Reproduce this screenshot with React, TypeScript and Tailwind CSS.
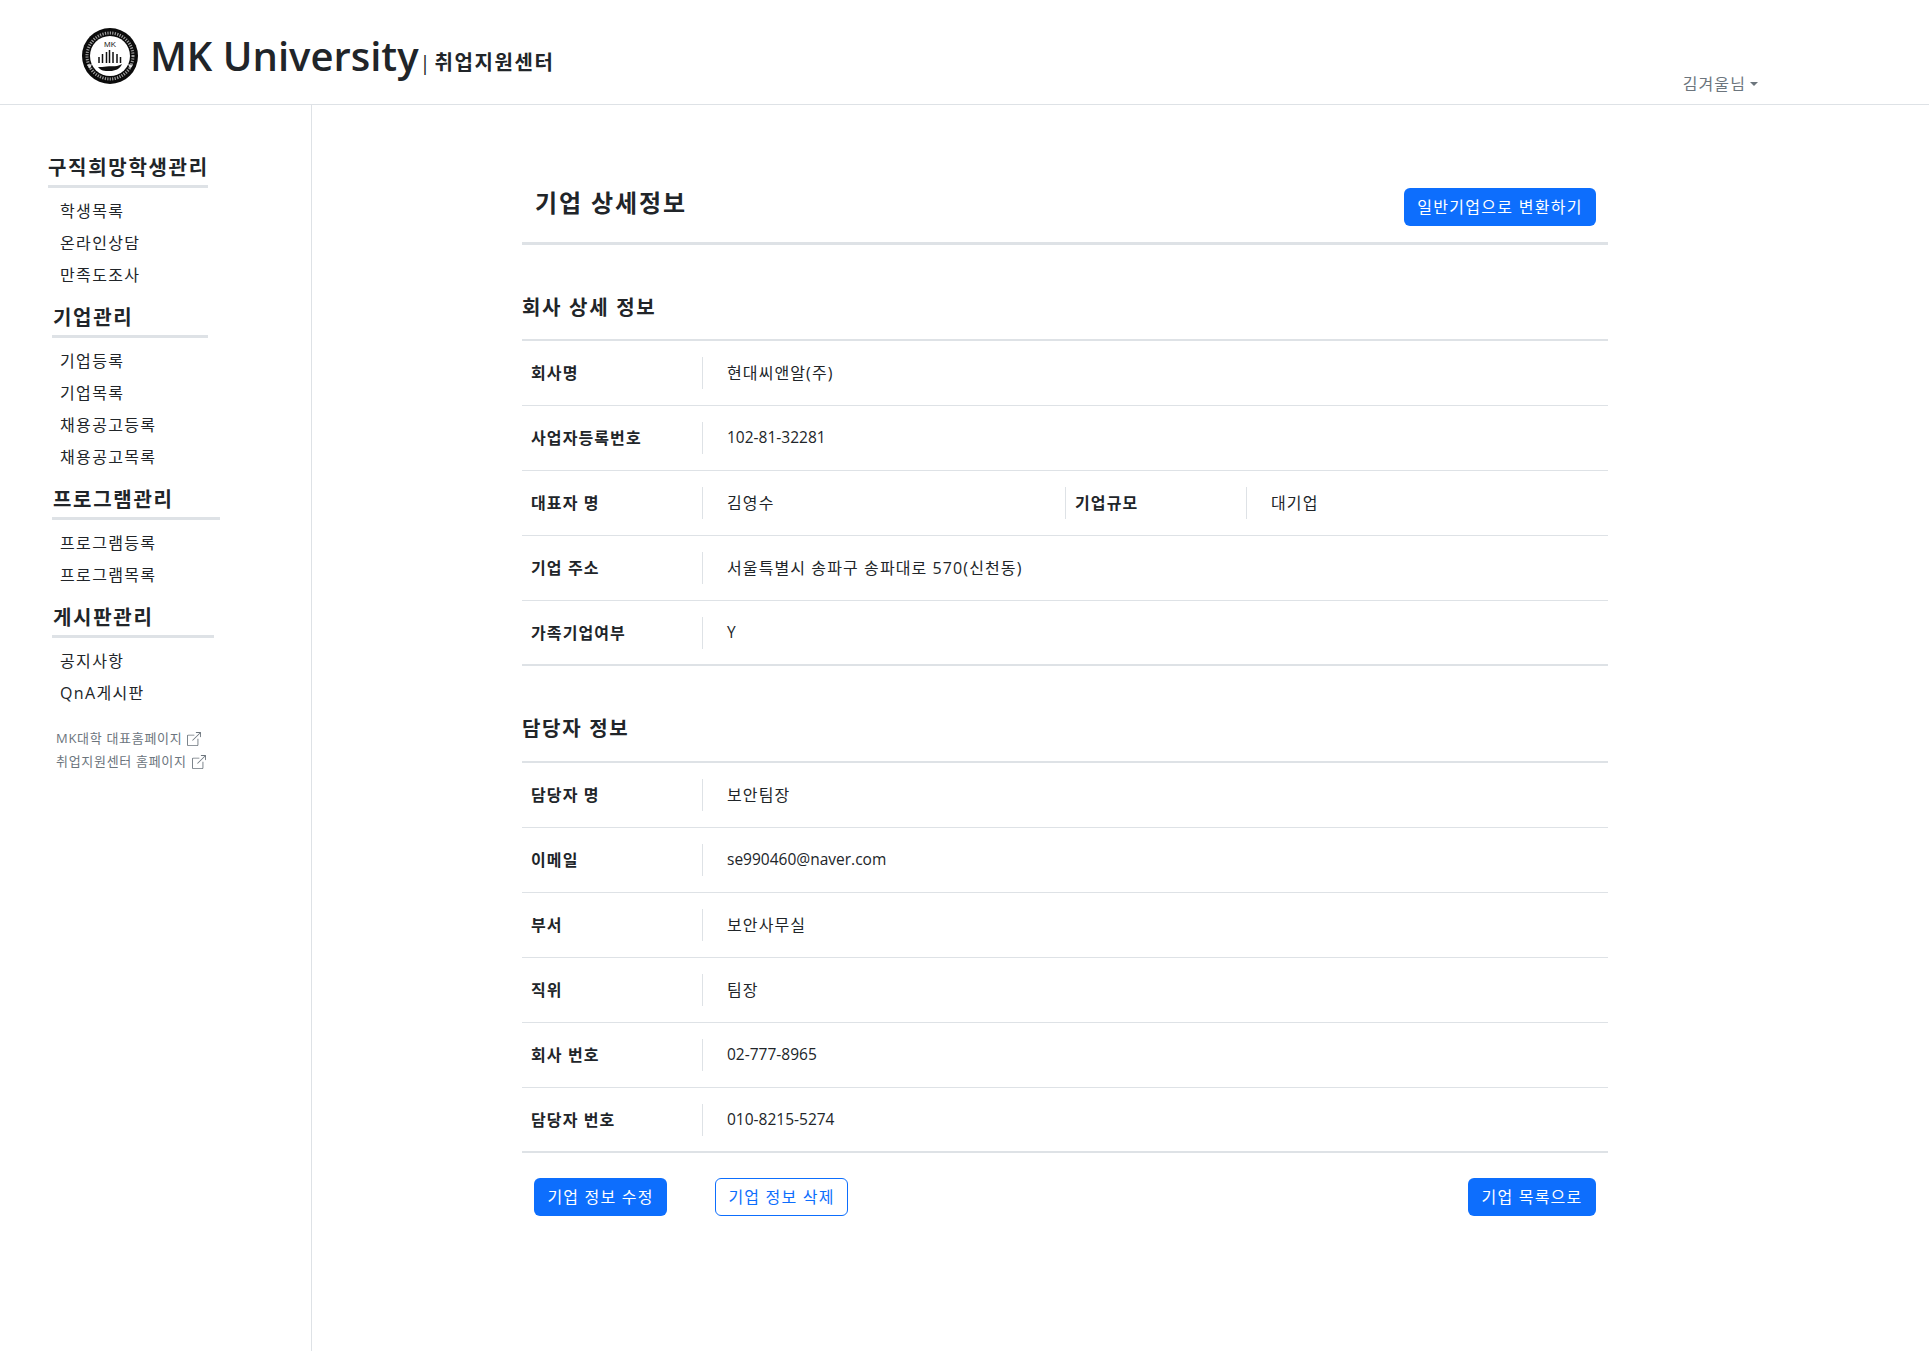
const font = "font-['Open_Sans','Noto_Sans_CJK_KR',sans-serif]";

type Field = { label: string; value: string; label2?: string; value2?: string };

const companyRows: Field[] = [
  { label: '회사명', value: '현대씨앤알(주)' },
  { label: '사업자등록번호', value: '102-81-32281' },
  { label: '대표자 명', value: '김영수', label2: '기업규모', value2: '대기업' },
  { label: '기업 주소', value: '서울특별시 송파구 송파대로 570(신천동)' },
  { label: '가족기업여부', value: 'Y' },
];

const managerRows: Field[] = [
  { label: '담당자 명', value: '보안팀장' },
  { label: '이메일', value: 'se990460@naver.com' },
  { label: '부서', value: '보안사무실' },
  { label: '직위', value: '팀장' },
  { label: '회사 번호', value: '02-777-8965' },
  { label: '담당자 번호', value: '010-8215-5274' },
];

const menus = [
  { title: '구직희망학생관리', items: ['학생목록', '온라인상담', '만족도조사'], titleClass: 'ml-0', lineClass: 'ml-0 w-[160px]' },
  { title: '기업관리', items: ['기업등록', '기업목록', '채용공고등록', '채용공고목록'], titleClass: 'ml-[5px]', lineClass: 'ml-[4px] w-[156px]' },
  { title: '프로그램관리', items: ['프로그램등록', '프로그램목록'], titleClass: 'ml-[5px]', lineClass: 'ml-[4px] w-[168px]' },
  { title: '게시판관리', items: ['공지사항', 'QnA게시판'], titleClass: 'ml-[5px]', lineClass: 'ml-[4px] w-[162px]' },
];

function Logo() {
  return (
    <svg viewBox="0 0 56 56" className="w-[56px] h-[56px] shrink-0">
      <circle cx="28" cy="28" r="28" fill="#0b0b0b" />
      <circle cx="28" cy="28" r="23" fill="none" stroke="#fff" strokeWidth="3" strokeDasharray="1.2 1.3" opacity="0.6" />
      <path d="M5 37l5-1-2 5zM51 37l-5-1 2 5z" fill="#fff" opacity="0.8" />
      <circle cx="28" cy="28" r="20" fill="#fff" />
      <text x="28" y="19" textAnchor="middle" fontSize="8" fontFamily="Liberation Sans, sans-serif" fill="#222">MK</text>
      <path d="M17 29v6M20.5 26v9M24.5 24v11M27.5 22v13M31 24v11M35 26v9M38.5 29v6" stroke="#111" strokeWidth="1.5" fill="none" />
      <path d="M16 39c4 .5 7-.8 11-.8s7 .8 13-2.2c-2 5-7 7-12 7-6 0-9 0-12-4z" fill="#111" />
    </svg>
  );
}

function ExternalIcon() {
  return (
    <svg viewBox="0 0 16 16" className="w-[14px] h-[14px] ml-[5px] inline-block" fill="#6c757d">
      <path fillRule="evenodd" d="M8.636 3.5a.5.5 0 0 0-.5-.5H1.5A1.5 1.5 0 0 0 0 4.5v10A1.5 1.5 0 0 0 1.5 16h10a1.5 1.5 0 0 0 1.5-1.5V7.864a.5.5 0 0 0-1 0V14.5a.5.5 0 0 1-.5.5h-10a.5.5 0 0 1-.5-.5v-10a.5.5 0 0 1 .5-.5h6.636a.5.5 0 0 0 .5-.5z" />
      <path fillRule="evenodd" d="M16 .5a.5.5 0 0 0-.5-.5h-5a.5.5 0 0 0 0 1h3.793L6.146 9.146a.5.5 0 1 0 .708.708L15 1.707V5.5a.5.5 0 0 0 1 0v-5z" />
    </svg>
  );
}

function Cell({ label, value, className }: { label: string; value: string; className: string }) {
  const valueClass = /[가-힣]/.test(value) ? 'text-[16px] tracking-[1.1px]' : 'text-[15.5px]';
  return (
    <div className={`flex items-center ${className}`}>
      <div className="w-[181px] shrink-0 h-[32px] pl-[9px] flex items-center font-semibold text-[16px] tracking-[1.1px] text-[#212529] border-r border-[#dee2e6]">
        {label}
      </div>
      <div className={`pl-[24px] text-[#212529] ${valueClass}`}>{value}</div>
    </div>
  );
}

function Row({ field, last }: { field: Field; last: boolean }) {
  return (
    <div className={`h-[65px] flex items-center ${last ? 'border-b-2 border-[#dee2e6]' : 'border-b border-[#dee2e6]'}`}>
      {field.label2 ? (
        <>
          <Cell label={field.label} value={field.value} className="w-[543px]" />
          <div className="w-px h-[32px] bg-[#dee2e6] shrink-0" />
          <Cell label={field.label2} value={field.value2 ?? ''} className="flex-1" />
        </>
      ) : (
        <Cell label={field.label} value={field.value} className="flex-1" />
      )}
    </div>
  );
}

export default function App() {
  return (
    <div className={`${font} min-h-screen bg-white text-[#212529] flex flex-col`}>
      <header className="h-[105px] border-b border-[#dee2e6] flex shrink-0">
        <div className="pl-[82px] pt-[28px] flex items-start">
          <Logo />
          <span className="ml-[12px] text-[40px] leading-[56px] font-semibold text-[#212529]">MK University</span>
          <div className="ml-[1px] mt-[20px] flex text-[20px] leading-[30px] text-[#212529]">
            <span className="w-[15px] font-normal">|</span>
            <span className="font-semibold tracking-[1.6px]">취업지원센터</span>
          </div>
        </div>
        <div className="ml-auto mr-[171px] mt-[72px] h-[24px] flex items-center text-[16px] tracking-[1.1px] text-[#6c757d]">
          김겨울님
          <span className="ml-[4px] w-0 h-0 border-x-[4px] border-x-transparent border-t-[4px] border-t-[#6c757d]" />
        </div>
      </header>

      <div className="flex flex-1">
        <aside className="w-[312px] shrink-0 border-r border-[#dee2e6] pl-[48px] pt-[47px]">
          {menus.map((menu) => (
            <div key={menu.title} className="mb-[11px]">
              <div className={`text-[20px] leading-[32px] font-semibold tracking-[1.7px] ${menu.titleClass}`}>{menu.title}</div>
              <div className={`h-[3px] bg-[#dee2e6] mt-[1px] ${menu.lineClass}`} />
              <ul className="mt-[7px] pl-[12px]">
                {menu.items.map((item) => (
                  <li key={item} className="h-[32px] leading-[32px] text-[16px] tracking-[1.35px] text-[#212529]">{item}</li>
                ))}
              </ul>
            </div>
          ))}
          <div className="pl-[8px] mt-[18px] text-[13px] leading-[23px] tracking-[0.7px] text-[#6c757d]">
            <div className="flex items-center">MK대학 대표홈페이지<ExternalIcon /></div>
            <div className="flex items-center">취업지원센터 홈페이지<ExternalIcon /></div>
          </div>
        </aside>

        <main className="w-[1086px] ml-[210px] pt-[83px] pb-[40px]">
          <div className="h-[54px] flex justify-between items-start px-[12px] border-b-[3px] border-[#dee2e6] box-content">
            <h2 className="text-[24px] leading-[32px] font-bold mt-[-1px] ml-[1px] tracking-[1.9px]">기업 상세정보</h2>
            <button className="h-[38px] w-[192px] rounded-[6px] bg-[#0d6efd] text-white text-[16px] tracking-[1.3px]">일반기업으로 변환하기</button>
          </div>

          <h3 className="mt-[47px] text-[20px] leading-[32px] font-semibold tracking-[1.7px]">회사 상세 정보</h3>
          <div className="mt-[15px] border-t-2 border-[#dee2e6]">
            {companyRows.map((r, i) => (
              <Row key={r.label} field={r} last={i === companyRows.length - 1} />
            ))}
          </div>

          <h3 className="mt-[47px] text-[20px] leading-[32px] font-semibold tracking-[1.7px]">담당자 정보</h3>
          <div className="mt-[16px] border-t-2 border-[#dee2e6]">
            {managerRows.map((r, i) => (
              <Row key={r.label} field={r} last={i === managerRows.length - 1} />
            ))}
          </div>

          <div className="mt-[25px] px-[12px] flex">
            <button className="h-[38px] w-[133px] rounded-[6px] bg-[#0d6efd] text-white text-[16px] tracking-[1.2px]">기업 정보 수정</button>
            <button className="h-[38px] w-[133px] ml-[48px] rounded-[6px] border border-[#0d6efd] text-[#0d6efd] text-[16px] tracking-[1.2px]">기업 정보 삭제</button>
            <button className="h-[38px] w-[128px] ml-auto rounded-[6px] bg-[#0d6efd] text-white text-[16px] tracking-[1.2px]">기업 목록으로</button>
          </div>
        </main>
      </div>
    </div>
  );
}
